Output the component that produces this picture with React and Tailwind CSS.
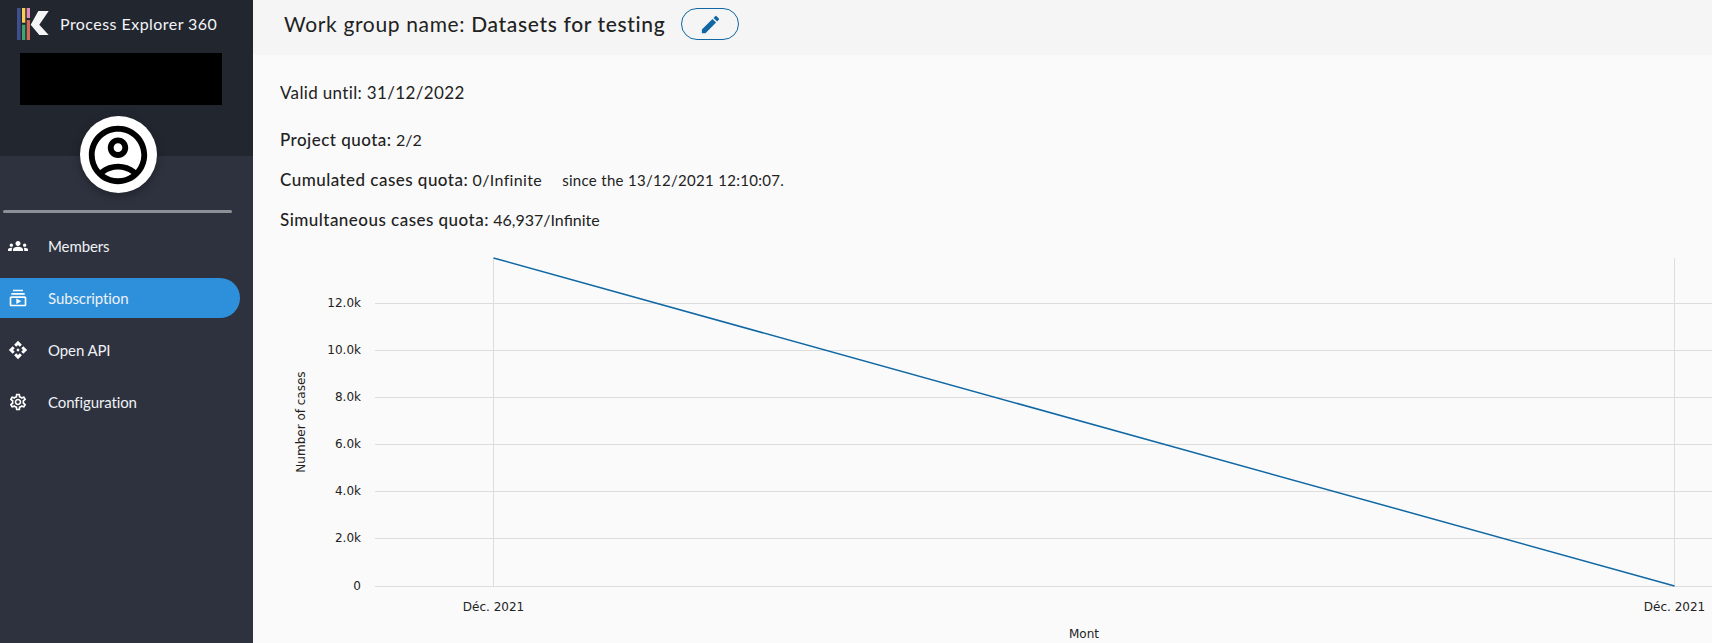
import React from "react";
import { MdGroups, MdOutlineSubscriptions, MdApi, MdOutlineSettings, MdOutlineAccountCircle, MdEdit } from "react-icons/md";

const ticks = [["12.0k", 303.5], ["10.0k", 350.5], ["8.0k", 397.5], ["6.0k", 444.5], ["4.0k", 491.5], ["2.0k", 538.5], ["0", 586.5]];
const Y0 = 240;
const X0 = 253;

function Chart() {
  return (
    <svg width="1459" height="403" viewBox={`${X0} ${Y0} 1459 403`} className="block shrink-0" style={{ fontFamily: '"DejaVu Sans", sans-serif' }}>
      {ticks.map(([l, y]) => (
        <g key={l}>
          <line x1="375" x2="1712" y1={y} y2={y} stroke="#dddddd" strokeWidth="1" />
          <text x="361" y={y + 3.5} textAnchor="end" fontSize="12" fill="#222">{l}</text>
        </g>
      ))}
      <line x1="493.5" x2="493.5" y1="258" y2="586" stroke="#dddddd" />
      <line x1="1674.5" x2="1674.5" y1="258" y2="586" stroke="#dddddd" />
      <polyline points="493.5,258 1674.5,586" fill="none" stroke="#0f67a3" strokeWidth="1.5" />
      <text x="493.5" y="611" textAnchor="middle" fontSize="12" fill="#222">Déc. 2021</text>
      <text x="1674.5" y="611" textAnchor="middle" fontSize="12" fill="#222">Déc. 2021</text>
      <text x="1084" y="638" textAnchor="middle" fontSize="12" fill="#222">Mont</text>
      <text transform="translate(305 422) rotate(-90)" textAnchor="middle" fontSize="12" fill="#222">Number of cases</text>
    </svg>
  );
}

function NavItem({ icon: Icon, label, active }) {
  return (
    <div className={`flex items-center h-10 w-[240px] rounded-r-[20px] ${active ? "bg-[#2e90da]" : ""}`}>
      <span className="w-12 pl-2 flex shrink-0"><Icon size={20} color="#fff" /></span>
      <span className="text-[15px] text-[#eef1f6] tracking-[-0.1px]">{label}</span>
    </div>
  );
}

export default function App() {
  return (
    <div className="flex h-screen overflow-hidden bg-[#fafafa] text-[#222]" style={{ fontFamily: 'Lato, "Open Sans", sans-serif' }}>
      <aside className="w-[253px] shrink-0 bg-[#2e323e] flex flex-col">
        <div className="h-[156px] bg-[#22262f] flex flex-col shrink-0">
          <div className="flex items-center h-[48px] mb-[5px] pl-[17px] shrink-0">
            <svg width="33" height="34" viewBox="17 7 33 34" className="shrink-0">
              <rect x="17" y="8" width="3.7" height="32" fill="#3f4e8c" />
              <rect x="22" y="8" width="3.3" height="14.7" fill="#f5cf55" />
              <rect x="22" y="24.7" width="3.3" height="15.3" fill="#3ea66e" />
              <rect x="26.7" y="8" width="3.3" height="10" fill="#e58ab8" />
              <rect x="26.7" y="20" width="3.3" height="20" fill="#cf6b57" />
              <polygon points="38.3,11 48.7,11 39.3,24.7 48.7,35 39.3,35 30.7,24.7" fill="#f5f5f5" />
            </svg>
            <span className="ml-[10px] text-[16px] text-[#f2f5f9] tracking-[0.45px]">Process Explorer 360</span>
          </div>
          <div className="ml-5 w-[202px] h-[52px] bg-black shrink-0" />
        </div>
        <div className="flex justify-center pr-[17px] -mt-[40px] relative">
          <div className="w-[77px] h-[77px] rounded-full bg-white flex items-center justify-center shadow-[0_3px_10px_rgba(0,0,0,0.3)]">
            <MdOutlineAccountCircle size={70} color="#000" />
          </div>
        </div>
        <div className="ml-[3px] mt-[17px] w-[229px] h-[3px] rounded-full bg-[#8e9097]" />
        <nav className="mt-[13px] flex flex-col gap-[12px]">
          <NavItem icon={MdGroups} label="Members" />
          <NavItem icon={MdOutlineSubscriptions} label="Subscription" active />
          <NavItem icon={MdApi} label="Open API" />
          <NavItem icon={MdOutlineSettings} label="Configuration" />
        </nav>
      </aside>
      <main className="flex-1 min-w-0 flex flex-col">
        <header className="h-[55px] bg-[#f5f5f5] flex items-center pl-[31px] pb-[7px] shrink-0">
          <h1 className="text-[21px] tracking-[0.65px] text-[#222]">
            Work group name: <span className="font-medium">Datasets for testing</span>
          </h1>
          <button className="ml-4 w-[58px] h-[32px] rounded-full border border-[#0f67a3] flex items-center justify-center">
            <MdEdit size={23} color="#0f67a3" />
          </button>
        </header>
        <div className="pl-[27px] pt-[27px] h-[185px] shrink-0 flex flex-col text-[17px] leading-[22px]">
          <p className="tracking-[0.35px]">Valid until: 31/12/2022</p>
          <p className="mt-[25px]"><span className="font-medium tracking-[0.47px]">Project quota:</span> <span className="text-[16px]">2/2</span></p>
          <p className="mt-[18px]"><span className="font-medium tracking-[0.47px]">Cumulated cases quota:</span> <span className="text-[16px] tracking-[0.36px]">0/Infinite</span><span className="ml-5 text-[15px] tracking-[0.3px]">since the 13/12/2021 12:10:07.</span></p>
          <p className="mt-[18px]"><span className="font-medium tracking-[0.47px]">Simultaneous cases quota:</span> <span className="text-[16px]">46,937/Infinite</span></p>
        </div>
        <Chart />
      </main>
    </div>
  );
}
